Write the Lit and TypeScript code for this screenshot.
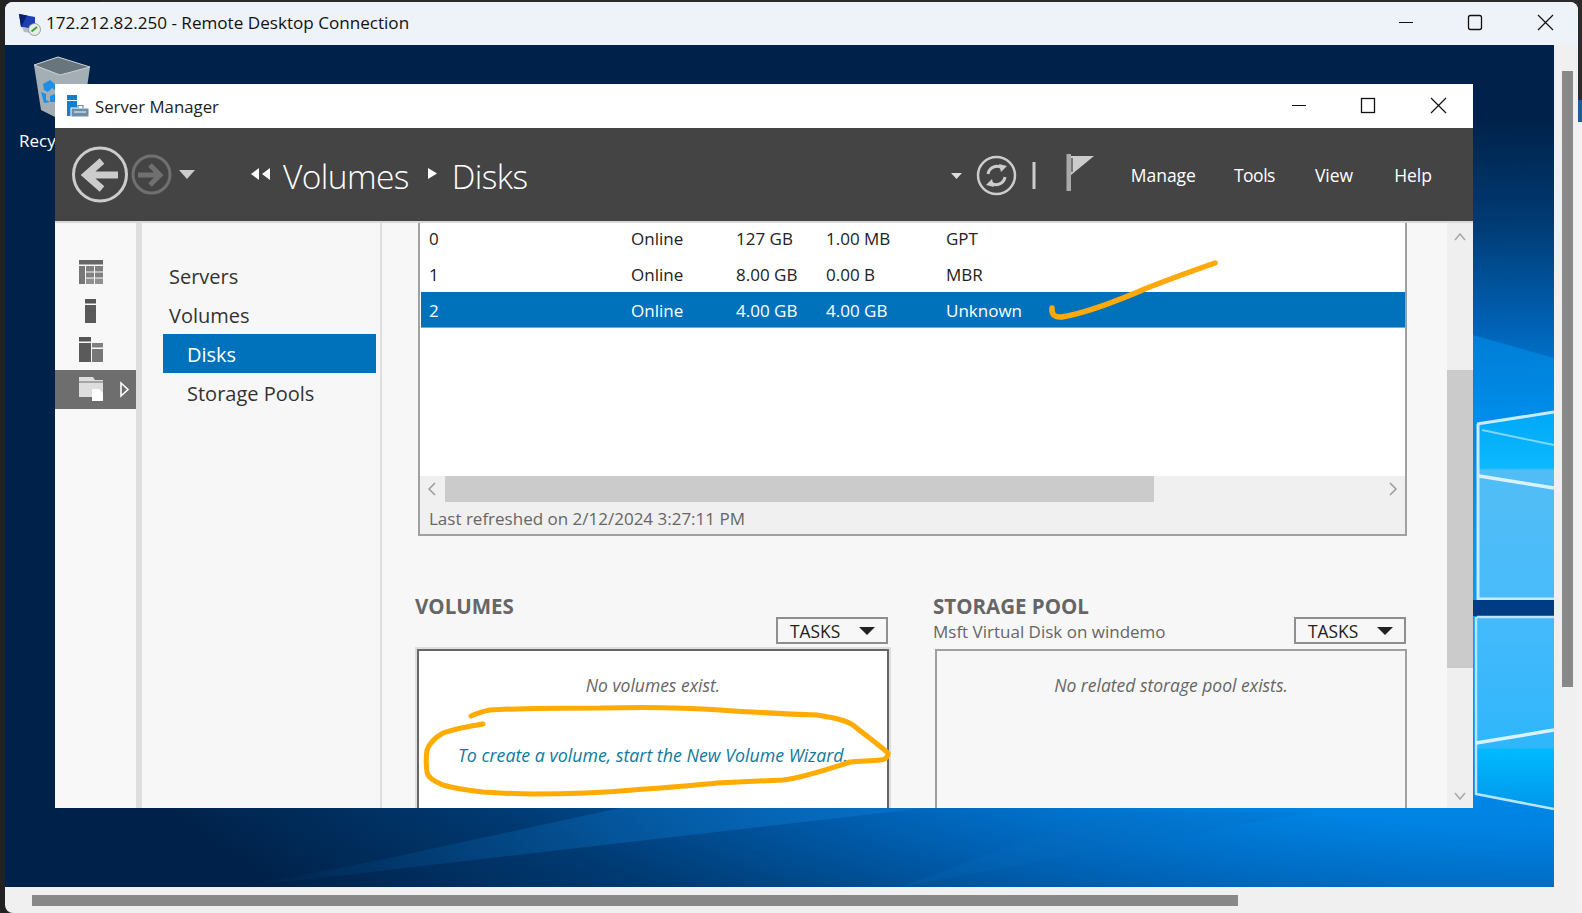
import { LitElement, html, css, svg } from 'lit';
import { customElement } from 'lit/decorators.js';

const DISKS = [
  { num: '0', status: 'Online', cap: '127 GB', free: '1.00 MB', part: 'GPT' },
  { num: '1', status: 'Online', cap: '8.00 GB', free: '0.00 B', part: 'MBR' },
  { num: '2', status: 'Online', cap: '4.00 GB', free: '4.00 GB', part: 'Unknown', selected: true },
];

const railIcons = [
  svg`<rect x="24" y="8" width="24" height="4.5" fill="#666"/><rect x="24" y="14" width="6" height="18" fill="#777"/><rect x="31" y="14" width="8" height="5.5" fill="#808080"/><rect x="40" y="14" width="8" height="5.5" fill="#808080"/><rect x="31" y="20.5" width="8" height="5" fill="#808080"/><rect x="40" y="20.5" width="8" height="5" fill="#808080"/><rect x="31" y="26.5" width="8" height="5.5" fill="#909090"/><rect x="40" y="26.5" width="8" height="5.5" fill="#909090"/>`,
  svg`<rect x="30" y="8" width="11" height="4.5" fill="#555"/><rect x="30" y="14" width="11" height="18" fill="#5a5a5a"/>`,
  svg`<rect x="24" y="7" width="12" height="4.5" fill="#555"/><rect x="24" y="13" width="12" height="19" fill="#5a5a5a"/><rect x="37" y="13" width="11" height="4.5" fill="#808080"/><rect x="37" y="19" width="11" height="13" fill="#777"/>`,
];

@customElement('app-root')
export class AppRoot extends LitElement {
  static styles = css`
    :host {
      display: block;
      position: relative;
      width: 1582px;
      height: 913px;
      overflow: hidden;
      background: linear-gradient(#222, #222) left / 100px 100% no-repeat,
        linear-gradient(#2b2b2b 0 100px, #1c5c9c 100px 122px, #f2f2f2 122px);
      font-family: 'Open Sans', 'Noto Sans', sans-serif;
      color: #222;
    }

    .rdp {
      position: absolute;
      left: 5px;
      top: 2px;
      width: 1573px;
      height: 911px;
      display: flex;
      flex-direction: column;
      background: #f0f0f0;
      border-radius: 8px;
      overflow: hidden;
    }
    .rdp-title {
      height: 43px;
      flex: none;
      display: flex;
      align-items: center;
      background: #eef2f9;
      font-size: 17.1px;
      color: #111;
    }
    .rdp-title .text {
      padding-bottom: 2px;
    }
    .rdp-title .icon {
      margin-left: 12px;
      margin-right: 5px;
    }
    .rdp-title .caption {
      margin-right: 10px;
    }
    .caption {
      margin-left: auto;
      margin-right: 12px;
      flex: none;
    }
    .rdp-middle {
      flex: none;
      height: 842px;
      display: flex;
    }
    .desktop {
      position: relative;
      width: 1549px;
      flex: none;
      overflow: hidden;
      background: radial-gradient(
        ellipse 1500px 500px at 1549px 575px,
        #00a2ff 0,
        #0082e2 42%,
        #0060b2 60%,
        #003a72 80%,
        #00224a 100%
      );
    }
    .wall {
      position: absolute;
      left: 0;
      top: 0;
    }
    .vtrack {
      flex: 1;
      position: relative;
    }
    .vthumb {
      position: absolute;
      left: 8px;
      right: 5px;
      top: 26px;
      height: 616px;
      background: #888;
    }
    .htrack {
      flex: 1;
      padding-top: 8px;
      padding-left: 27px;
    }
    .hthumb {
      width: 1206px;
      height: 11px;
      background: #888;
    }

    .bin {
      position: absolute;
      left: 17px;
      top: 11px;
      color: #fff;
      font-size: 17px;
    }
    .bin svg {
      display: block;
      margin-left: 12px;
    }
    .bin span {
      display: block;
      margin-top: 11px;
      margin-left: -3px;
      line-height: 24px;
    }

    .sm {
      position: absolute;
      left: 50px;
      top: 39px;
      width: 1418px;
      height: 724px;
      display: flex;
      flex-direction: column;
      overflow: hidden;
      background: #f7f7f7;
    }
    .sm-title {
      height: 44px;
      flex: none;
      display: flex;
      align-items: center;
      background: #fff;
      font-size: 16.8px;
      color: #222;
    }
    .sm-title .icon {
      margin-left: 11px;
      margin-right: 6px;
    }
    .toolbar {
      height: 93px;
      flex: none;
      display: flex;
      align-items: center;
      background: #444;
      border-bottom: 2px solid #d8d8d8;
      box-sizing: content-box;
      color: #fff;
      padding-left: 15px;
      padding-right: 41px;
    }
    .crumb {
      display: flex;
      align-items: center;
      margin-left: 55px;
      font-weight: 300;
      font-size: 33.5px;
      letter-spacing: -0.6px;
      padding-top: 2px;
    }
    .crumb .sep {
      margin: 0 15px 4px 19px;
    }
    .crumb .back {
      margin: 0 13px 4px 0;
    }
    .tools {
      margin-left: auto;
      display: flex;
      align-items: center;
      gap: 39px;
      font-size: 17.5px;
      padding-top: 1px;
    }
    .tools svg {
      margin-top: -1px;
      margin-right: -2px;
    }
    .tools .manage {
      margin-right: -1px;
    }
    .tools .tight {
      letter-spacing: -0.5px;
      margin-right: 1px;
    }
    .tools .view {
      margin-right: 2px;
    }

    .sm-body {
      flex: 1;
      display: flex;
      min-height: 0;
    }
    .rail {
      width: 81px;
      flex: none;
      padding-top: 29px;
      border-right: 6px solid #dedede;
      background: #f8f8f8;
    }
    .rail-item {
      height: 39px;
    }
    .rail-item svg {
      display: block;
    }
    .rail-item.active {
      margin-top: 1px;
      background: #6e6e6e;
    }
    .nav {
      flex: none;
      width: 240px;
      padding-top: 33px;
      box-sizing: border-box;
      border-right: 2px solid #dedede;
      font-size: 20px;
      color: #333;
    }
    .nav-item {
      width: 213px;
      margin-left: 21px;
      height: 39px;
      line-height: 42px;
      padding-left: 6px;
      box-sizing: border-box;
    }
    .nav-item.child {
      padding-left: 24px;
    }
    .nav-item.active {
      background: #0072bc;
      color: #fff;
    }
    .content {
      flex: 1;
      min-width: 0;
      padding-left: 33px;
    }
    .table {
      margin-left: 3px;
      width: 989px;
      height: 313px;
      box-sizing: border-box;
      border: 2px solid #a0a0a0;
      border-top: none;
      background: #fff;
      display: flex;
      flex-direction: column;
      font-size: 17px;
    }
    .rows {
      height: 253px;
      flex: none;
      padding-left: 1px;
    }
    .row {
      height: 35px;
      display: grid;
      grid-template-columns: 202px 105px 90px 120px 1fr;
      padding-left: 8px;
      padding-bottom: 1px;
      align-items: center;
      box-sizing: border-box;
      color: #222;
    }
    .row:first-child {
      height: 34px;
      padding-bottom: 4px;
    }
    .row.selected {
      height: 36px;
      padding-top: 2px;
      padding-bottom: 0;
      background: #0072bc;
      color: #fff;
      border-bottom: 1px solid #69aee0;
    }
    .hbar {
      height: 26px;
      flex: none;
      background: #f0f0f0;
      position: relative;
      display: flex;
      align-items: center;
      justify-content: space-between;
      padding: 0 8px;
    }
    .hbar .thumb {
      position: absolute;
      left: 25px;
      width: 709px;
      top: 0;
      bottom: 0;
      background: #cbcbcb;
    }
    .foot {
      flex: 1;
      min-height: 0;
      background: #f0f0f0;
      color: #666;
      padding-left: 9px;
      line-height: 33px;
    }
    .sections {
      margin-top: 59px;
      display: grid;
      grid-template-columns: 476px 476px;
      column-gap: 42px;
    }
    .head {
      font-size: 20.5px;
      font-weight: 700;
      padding-top: 1px;
      line-height: 21px;
      color: #666;
    }
    .sub {
      display: flex;
      justify-content: space-between;
      align-items: center;
      height: 27px;
      padding-right: 3px;
      font-size: 17px;
      color: #666;
    }
    .sub span {
      padding-top: 2px;
    }
    .sub.end {
      justify-content: flex-end;
    }
    .tasks {
      width: 112px;
      height: 27px;
      box-sizing: border-box;
      border: 2px solid #8f8f8f;
      display: flex;
      align-items: center;
      justify-content: space-between;
      padding: 1px 11px 0 12px;
      font-size: 17.4px;
      color: #222;
      background: #f7f7f7;
    }
    .tri {
      width: 0;
      height: 0;
      padding: 0;
      border-left: 8px solid transparent;
      border-right: 8px solid transparent;
      border-top: 8px solid #222;
    }
    .wrap {
      margin-top: 3px;
      padding: 2px;
    }
    .wrap.focus {
      background: #dedede;
    }
    .panel {
      height: 300px;
      padding-top: 22px;
      box-sizing: border-box;
      border: 2px solid #a0a0a0;
      text-align: center;
      font-style: italic;
      font-size: 17.5px;
      line-height: 24px;
      color: #666;
    }
    .wrap.focus .panel {
      border-color: #666;
      background: #fff;
    }
    .link {
      margin-top: 46px;
      color: #0f7a9c;
      font-size: 17.8px;
    }
    .vbar {
      width: 26px;
      flex: none;
      position: relative;
      background: #efefef;
    }
    .vbar .thumb {
      position: absolute;
      left: 0;
      right: 0;
      top: 147px;
      height: 298px;
      background: #cbcbcb;
    }
    .vbar svg {
      position: absolute;
      left: 7px;
    }
    .vbar .up {
      top: 10px;
    }
    .vbar .down {
      top: 569px;
    }

    .ink {
      position: absolute;
      left: 0;
      top: 0;
      pointer-events: none;
    }
  `;

  private captionButtons(rounded: boolean) {
    return html`
      <svg class="caption" width="170" height="43" viewBox="0 0 170 43">
        <path d="M1 20.5 H15" stroke="#111" stroke-width="1.2" />
        <rect x="70.5" y="13.5" width="13" height="14" rx=${rounded ? 2 : 0} fill="none" stroke="#111" stroke-width="1.3" />
        <path d="M140 13 L155 28 M155 13 L140 28" stroke="#111" stroke-width="1.2" />
      </svg>
    `;
  }

  private renderWallpaper() {
    return html`
      <svg class="wall" width="1549" height="842" viewBox="5 45 1549 842">
        <defs>
          <linearGradient id="pane" x1="0" y1="0" x2="0" y2="1">
            <stop offset="0" stop-color="#00a8f6" />
            <stop offset="0.3" stop-color="#0cb9ff" />
            <stop offset="0.31" stop-color="#52bdf5" />
            <stop offset="1" stop-color="#49bcfb" />
          </linearGradient>
          <linearGradient id="pane2" x1="0" y1="0" x2="0" y2="1">
            <stop offset="0" stop-color="#45bafb" />
            <stop offset="0.68" stop-color="#2fb6fb" />
            <stop offset="0.69" stop-color="#00baff" />
            <stop offset="1" stop-color="#0096ea" />
          </linearGradient>
          <linearGradient id="streak" x1="0" y1="0" x2="1" y2="0">
            <stop offset="0" stop-color="#0a6fc0" stop-opacity="0" />
            <stop offset="0.55" stop-color="#0a6fc0" stop-opacity="0.4" />
            <stop offset="1" stop-color="#0a74c8" stop-opacity="0.7" />
          </linearGradient>
        </defs>
        <path d="M1473 335 L1554 358 V420 L1473 430 Z" fill="#0095f0" opacity="0.5" />
        <path d="M1477 424 L1554 412 V599 H1477 Z" fill="url(#pane)" />
        <path d="M1477 424 L1554 412 M1478 424 V599 H1554" fill="none" stroke="#c8ecff" stroke-width="3" />
        <path d="M1479 476 L1554 488" stroke="#d8f2ff" stroke-width="3.5" />
        <path d="M1482 430 L1554 445" stroke="#7fd6ff" stroke-width="2" />
        <rect x="1473" y="600" width="81" height="16" fill="#003c84" />
        <path d="M1477 617 H1554 V809 L1476 794 Z" fill="url(#pane2)" />
        <path d="M1477 617 H1554 M1476 617 V794 L1554 809" fill="none" stroke="#b8e6ff" stroke-width="2.5" />
        <path d="M1476 743 L1554 730" stroke="#d8f2ff" stroke-width="3.5" />
        <path d="M240 887 L925 808 H620 L380 860 Z" fill="url(#streak)" />
        <path d="M900 887 L1310 812 H1100 Z" fill="#0a6fc0" opacity="0.22" />
      </svg>
      <div class="bin">
        <svg width="58" height="62" viewBox="34 56 58 62">
          <path d="M34 65 L58 57 L90 67 L84 108 L55 117 L41 110 Z" fill="#a4aeb5" />
          <path d="M34 65 L58 57 L90 67 L60 75 Z" fill="#69757c" stroke="#c8d0d6" stroke-width="1" />
          <path d="M43 84 L50 80 L55 84 V90 L52 88 L48 92 L44 90 Z M41 92 L46 94 L46 100 L50 102 L44 103 Z M50 96 L55 94 V102 L50 102 Z" fill="#1f8fe6" />
        </svg>
        <span>Recycle Bin</span>
      </div>
    `;
  }

  private renderToolbar() {
    return html`
      <div class="toolbar">
        <svg width="126" height="60" viewBox="70 145 126 60">
          <circle cx="100" cy="174.5" r="26.5" fill="none" stroke="#ccc" stroke-width="3" />
          <path d="M118 175 H88 M102 161 L86 175 L102 189" fill="none" stroke="#ccc" stroke-width="7" />
          <circle cx="151.5" cy="174.5" r="18.5" fill="none" stroke="#707070" stroke-width="3" />
          <path d="M138 175 H158 M150 165 L160 175 L150 185" fill="none" stroke="#707070" stroke-width="5" />
          <path d="M179 170 H195 L187 179 Z" fill="#ccc" />
        </svg>
        <div class="crumb">
          <svg class="back" width="19" height="12" viewBox="0 0 19 12">
            <path d="M0 6 L8 0 V12 Z M11 6 L19 0 V12 Z" fill="#fff" />
          </svg>
          Volumes
          <svg class="sep" width="9" height="11" viewBox="0 0 9 11"><path d="M0 0 L9 5.5 L0 11 Z" fill="#fff" /></svg>
          Disks
        </div>
        <div class="tools">
          <svg width="143" height="42" viewBox="951 153 143 42">
            <path d="M951 172 H962 L956.5 178 Z" fill="#ddd" />
            <circle cx="996.5" cy="174.5" r="18.5" fill="none" stroke="#ccc" stroke-width="2.5" />
            <path d="M988 173 A9 9 0 0 1 1002 167" fill="none" stroke="#ccc" stroke-width="3" />
            <path d="M999 163 L1007 165 L1001 171 Z" fill="#ccc" />
            <path d="M1005 176 A9 9 0 0 1 991 182" fill="none" stroke="#ccc" stroke-width="3" />
            <path d="M994 186 L986 184 L992 178 Z" fill="#ccc" />
            <rect x="1032.5" y="161" width="3" height="27" fill="#ccc" />
            <rect x="1066.5" y="153" width="4.5" height="37" fill="#aaa" />
            <path d="M1071 155 H1094 L1071 174 Z" fill="#ccc" />
            <rect x="1071" y="157" width="2" height="14" fill="#777" />
          </svg>
          <span class="manage">Manage</span>
          <span class="tight">Tools</span>
          <span class="view">View</span>
          <span>Help</span>
        </div>
      </div>
    `;
  }

  private renderRail() {
    return html`
      <div class="rail">
        ${railIcons.map(
          icon => html`<div class="rail-item"><svg width="81" height="39" viewBox="0 0 81 39">${icon}</svg></div>`
        )}
        <div class="rail-item active">
          <svg width="81" height="39" viewBox="0 0 81 39">
            <path d="M24 7 H38 L40 10 H48 V27 H24 Z" fill="#ddd" />
            <path d="M24 12 H48" stroke="#6e6e6e" stroke-width="1" />
            <path d="M37 19 H44 L48 23 V31 H37 Z" fill="#fff" />
            <path d="M66 13 L73 19.5 L66 26 Z" fill="none" stroke="#fff" stroke-width="1.6" />
          </svg>
        </div>
      </div>
    `;
  }

  private renderNav() {
    return html`
      <div class="nav">
        <div class="nav-item">Servers</div>
        <div class="nav-item">Volumes</div>
        <div class="nav-item child active">Disks</div>
        <div class="nav-item child">Storage Pools</div>
      </div>
    `;
  }

  private renderTable() {
    return html`
      <div class="table">
        <div class="rows">
          ${DISKS.map(
            d => html`
              <div class="row ${d.selected ? 'selected' : ''}">
                <span>${d.num}</span><span>${d.status}</span><span>${d.cap}</span><span>${d.free}</span><span>${d.part}</span>
              </div>
            `
          )}
        </div>
        <div class="hbar">
          <div class="thumb"></div>
          <svg width="8" height="14" viewBox="0 0 8 14"><path d="M7 1 L1 7 L7 13" fill="none" stroke="#999" stroke-width="1.5" /></svg>
          <svg width="8" height="14" viewBox="0 0 8 14"><path d="M1 1 L7 7 L1 13" fill="none" stroke="#999" stroke-width="1.5" /></svg>
        </div>
        <div class="foot">Last refreshed on 2/12/2024 3:27:11 PM</div>
      </div>
    `;
  }

  private renderSections() {
    return html`
      <div class="sections">
        <div>
          <div class="head">VOLUMES</div>
          <div class="sub end">
            <div class="tasks">TASKS<i class="tri"></i></div>
          </div>
          <div class="wrap focus">
            <div class="panel">
              <div>No volumes exist.</div>
              <div class="link">To create a volume, start the New Volume Wizard.</div>
            </div>
          </div>
        </div>
        <div>
          <div class="head">STORAGE POOL</div>
          <div class="sub">
            <span>Msft Virtual Disk on windemo</span>
            <div class="tasks">TASKS<i class="tri"></i></div>
          </div>
          <div class="wrap">
            <div class="panel">No related storage pool exists.</div>
          </div>
        </div>
      </div>
    `;
  }

  render() {
    return html`
      <div class="rdp">
        <div class="rdp-title">
          <svg class="icon" width="24" height="24" viewBox="0 0 24 24">
            <path d="M2 2 L18 5 V17 L4 15 Z" fill="#1d3fb0" />
            <path d="M2 2 L10 3.5 L4 15 Z" fill="#0a1f70" />
            <path d="M5 15 L14 17 L15 21 L7 20 Z" fill="#b5bcc8" />
            <circle cx="17.5" cy="17.5" r="6" fill="#e8ece8" stroke="#888" stroke-width="0.8" />
            <path d="M14.5 19.5 L20 15" stroke="#3a9a3a" stroke-width="1.8" />
          </svg>
          <span class="text">172.212.82.250 - Remote Desktop Connection</span>
          ${this.captionButtons(true)}
        </div>
        <div class="rdp-middle">
          <div class="desktop">
            ${this.renderWallpaper()}
            <div class="sm">
              <div class="sm-title">
                <svg class="icon" width="23" height="22" viewBox="0 0 23 22">
                  <rect x="1" y="0" width="10" height="5" fill="#0f7fd0" />
                  <rect x="1" y="6" width="10" height="15" fill="#0f7fd0" />
                  <rect x="5" y="13" width="18" height="9" fill="#6b8fa8" stroke="#fff" stroke-width="1" />
                  <path d="M12 13 V10.5 H17 V13" fill="none" stroke="#6b8fa8" stroke-width="1.2" />
                  <path d="M8 17 H20" stroke="#fff" stroke-width="1" />
                </svg>
                Server Manager
                ${this.captionButtons(false)}
              </div>
              ${this.renderToolbar()}
              <div class="sm-body">
                ${this.renderRail()} ${this.renderNav()}
                <div class="content">${this.renderTable()} ${this.renderSections()}</div>
                <div class="vbar">
                  <div class="thumb"></div>
                  <svg class="up" width="12" height="8" viewBox="0 0 12 8"><path d="M1 7 L6 1 L11 7" fill="none" stroke="#aaa" stroke-width="1.6" /></svg>
                  <svg class="down" width="12" height="8" viewBox="0 0 12 8"><path d="M1 1 L6 7 L11 1" fill="none" stroke="#aaa" stroke-width="1.6" /></svg>
                </div>
              </div>
            </div>
          </div>
          <div class="vtrack"><div class="vthumb"></div></div>
        </div>
        <div class="htrack"><div class="hthumb"></div></div>
      </div>
      <svg class="ink" width="1582" height="913" viewBox="0 0 1582 913">
        <path
          d="M471 716 C478 713 484 711 490 710 C520 708 560 708 600 708 C640 707 680 707 720 710 C760 713 790 714 817 715 C835 718 845 720 853 725 C865 735 878 744 888 753 C888 758 884 760 880 760 C870 761 860 761 850 762 C825 770 805 777 783 780 C760 781 738 782 717 783 C690 786 660 788 633 790 C600 793 565 794 533 794 C515 794 500 793 483 792 C465 790 453 788 443 785 C434 781 428 778 427 772 C426 765 426 757 427 750 C430 742 436 737 443 733 C455 729 470 726 483 724"
          fill="none"
          stroke="#ffab00"
          stroke-width="5"
          stroke-linecap="round"
        />
        <path
          d="M1052 308 Q1051 318 1062 317 C1085 313 1115 302 1147 288 C1170 279 1192 271 1215 263"
          fill="none"
          stroke="#ffa90a"
          stroke-width="5.5"
          stroke-linecap="round"
        />
      </svg>
    `;
  }
}

declare global {
  interface HTMLElementTagNameMap {
    'app-root': AppRoot;
  }
}
